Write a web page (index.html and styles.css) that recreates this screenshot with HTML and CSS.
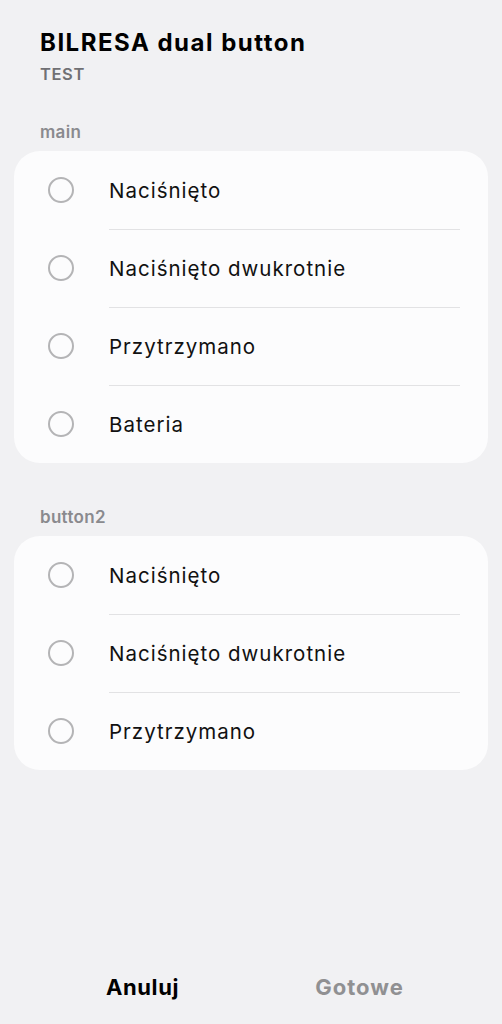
FILE: index.html
```html
<!DOCTYPE html>
<html lang="pl">
<head>
    <meta charset="UTF-8">
    <meta name="viewport" content="width=device-width, initial-scale=1.0">
    <title>BILRESA dual button</title>
    <link rel="stylesheet" href="styles.css">
</head>
<body>
    <div class="screen">
        <!-- Header -->
        <header class="sheet-header">
            <h1 class="sheet-title">BILRESA dual button</h1>
            <p class="sheet-subtitle">TEST</p>
        </header>

        <!-- Groups -->
        <section class="group">
            <h2 class="group-label">main</h2>
            <ul class="card">
                <li class="option"><span class="radio"></span><span class="option-text">Naciśnięto</span></li>
                <li class="option"><span class="radio"></span><span class="option-text">Naciśnięto dwukrotnie</span></li>
                <li class="option"><span class="radio"></span><span class="option-text">Przytrzymano</span></li>
                <li class="option"><span class="radio"></span><span class="option-text">Bateria</span></li>
            </ul>
        </section>

        <section class="group">
            <h2 class="group-label">button2</h2>
            <ul class="card">
                <li class="option"><span class="radio"></span><span class="option-text">Naciśnięto</span></li>
                <li class="option"><span class="radio"></span><span class="option-text">Naciśnięto dwukrotnie</span></li>
                <li class="option"><span class="radio"></span><span class="option-text">Przytrzymano</span></li>
            </ul>
        </section>

        <!-- Footer buttons -->
        <footer class="actions">
            <button type="button" class="action">Anuluj</button>
            <button type="button" class="action disabled">Gotowe</button>
        </footer>
    </div>
</body>
</html>
```

FILE: styles.css
```css
/* Global Styles */
* {
    margin: 0;
    padding: 0;
    box-sizing: border-box;
    font-family: 'Inter', 'Liberation Sans', sans-serif;
}

body {
    background-color: #f1f1f3;
    color: #000;
}

.screen {
    display: flex;
    flex-direction: column;
    height: 1024px;
    padding: 0 14px;
}

/* Header */
.sheet-header {
    padding: 28px 26px 0;
}

.sheet-title {
    font-size: 24px;
    font-weight: bold;
    line-height: 30px;
    letter-spacing: 1.5px;
}

.sheet-subtitle {
    font-size: 16.5px;
    font-weight: 600;
    color: #707074;
    line-height: 20px;
    letter-spacing: 0.6px;
    margin-top: 6px;
}

/* Groups */
.group-label {
    font-size: 17px;
    font-weight: 600;
    color: #8a8a8e;
    line-height: 20px;
    letter-spacing: 0.3px;
    padding: 0 26px;
    margin-top: 38px;
    margin-bottom: 9px;
}

.group + .group .group-label {
    margin-top: 44px;
}

.card {
    list-style: none;
    background-color: #fcfcfd;
    border-radius: 26px;
}

.option {
    display: flex;
    align-items: center;
    height: 78px;
    padding-left: 34px;
    position: relative;
}

.option + .option::before {
    content: '';
    position: absolute;
    top: 0;
    left: 95px;
    right: 28px;
    height: 1px;
    background-color: #e2e2e4;
}

.radio {
    width: 26px;
    height: 26px;
    border: 2px solid #b4b4b6;
    border-radius: 50%;
    flex-shrink: 0;
}

.option-text {
    margin-left: 35px;
    font-size: 20.5px;
    letter-spacing: 1px;
    color: #111;
}

/* Actions */
.actions {
    margin-top: auto;
    display: flex;
    padding: 0 20px 7px;
}

.action {
    flex: 1;
    background: none;
    border: none;
    font-size: 22px;
    font-weight: bold;
    letter-spacing: 0.6px;
    color: #000;
    height: 60px;
    cursor: pointer;
}

.action.disabled {
    color: #909092;
    letter-spacing: 1px;
}
```
